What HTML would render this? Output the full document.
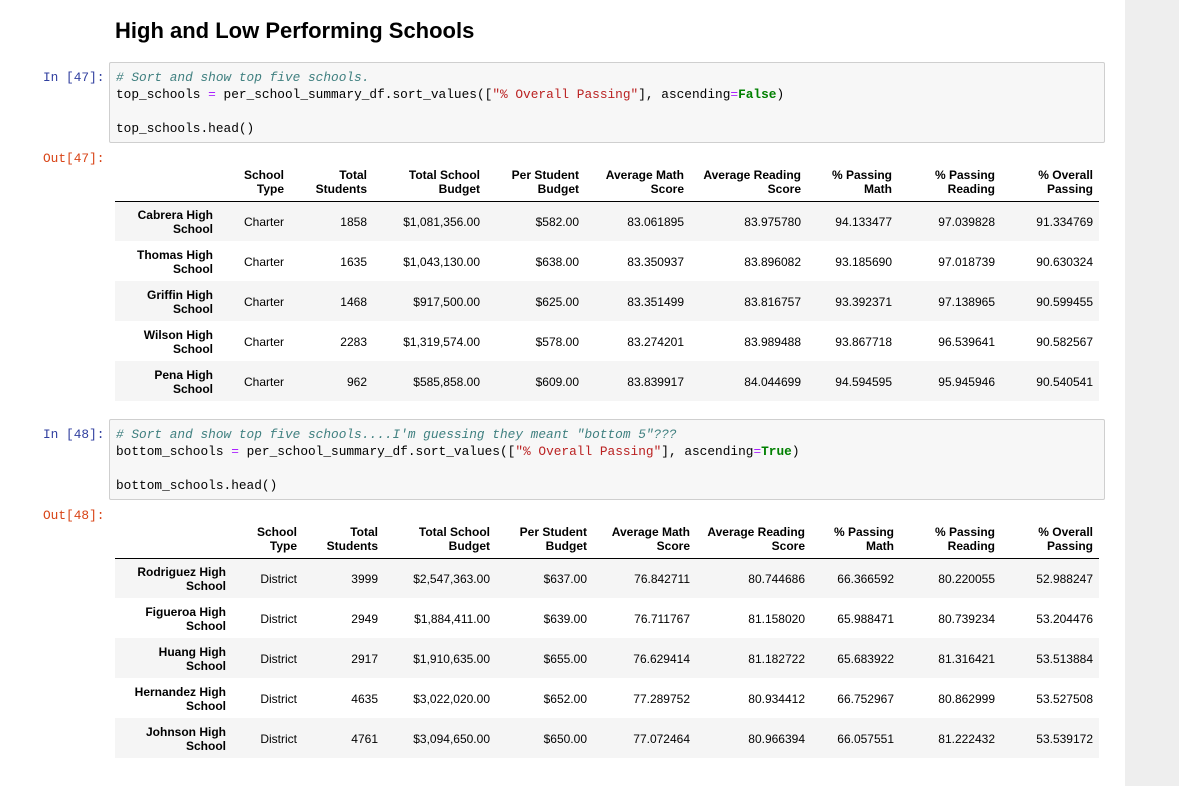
<!DOCTYPE html>
<html><head><meta charset="utf-8"><style>
*{margin:0;padding:0;box-sizing:border-box}
body{width:1179px;height:786px;background:#fff;position:relative;overflow:hidden;font-family:"Liberation Sans",Arial,sans-serif;color:#000}
.side{position:absolute;left:1125px;top:0;width:54px;height:786px;background:#eeeeee}
h1{position:absolute;left:115px;top:17px;font-size:22px;font-weight:bold;line-height:28px}
.prompt{position:absolute;font-family:"Liberation Mono","DejaVu Sans Mono",monospace;font-size:12.8px;line-height:17px}
.in{color:#303F9F}.out{color:#D84315}
.code{position:absolute;left:109px;width:996px;background:#f7f7f7;border:1px solid #cfcfcf;border-radius:2px;padding:6px 6px 4px;font-family:"Liberation Mono","DejaVu Sans Mono",monospace;font-size:12.8px;line-height:17px;white-space:pre;color:#000}
.c{color:#408080;font-style:italic}.o{color:#AA22FF}.s{color:#BA2121}.k{color:#008000;font-weight:bold}
table{position:absolute;left:115px;border-collapse:collapse;table-layout:fixed;font-size:12px}
th,td{text-align:right;padding:0 6px 0 0;vertical-align:middle}
td{padding-top:1px}
thead th{height:35px;line-height:14px;vertical-align:bottom;padding-bottom:5px;border-bottom:1px solid #000}
tbody tr{height:40px}
tbody th{line-height:14px;padding-top:1px}
tbody tr:nth-child(odd){background:#f5f5f5}
</style></head><body>
<div class="side"></div>
<h1>High and Low Performing Schools</h1>

<div class="prompt in" style="left:43px;top:69px">In [47]:</div>
<div class="code" style="top:62px;height:81px"><span class="c"># Sort and show top five schools.</span>
top_schools <span class="o">=</span> per_school_summary_df.sort_values([<span class="s">"% Overall Passing"</span>], ascending<span class="o">=</span><span class="k">False</span>)

top_schools.head()</div>
<div class="prompt out" style="left:43px;top:150px">Out[47]:</div>

<table style="top:166px;width:984px">
<colgroup><col style="width:104px"><col style="width:71px"><col style="width:83px"><col style="width:113px"><col style="width:99px"><col style="width:105px"><col style="width:117px"><col style="width:91px"><col style="width:103px"><col style="width:98px"></colgroup>
<thead><tr><th></th><th>School<br>Type</th><th>Total<br>Students</th><th>Total School<br>Budget</th><th>Per Student<br>Budget</th><th>Average Math<br>Score</th><th>Average Reading<br>Score</th><th>% Passing<br>Math</th><th>% Passing<br>Reading</th><th>% Overall<br>Passing</th></tr></thead>
<tbody>
<tr><th>Cabrera High<br>School</th><td>Charter</td><td>1858</td><td>$1,081,356.00</td><td>$582.00</td><td>83.061895</td><td>83.975780</td><td>94.133477</td><td>97.039828</td><td>91.334769</td></tr>
<tr><th>Thomas High<br>School</th><td>Charter</td><td>1635</td><td>$1,043,130.00</td><td>$638.00</td><td>83.350937</td><td>83.896082</td><td>93.185690</td><td>97.018739</td><td>90.630324</td></tr>
<tr><th>Griffin High<br>School</th><td>Charter</td><td>1468</td><td>$917,500.00</td><td>$625.00</td><td>83.351499</td><td>83.816757</td><td>93.392371</td><td>97.138965</td><td>90.599455</td></tr>
<tr><th>Wilson High<br>School</th><td>Charter</td><td>2283</td><td>$1,319,574.00</td><td>$578.00</td><td>83.274201</td><td>83.989488</td><td>93.867718</td><td>96.539641</td><td>90.582567</td></tr>
<tr><th>Pena High<br>School</th><td>Charter</td><td>962</td><td>$585,858.00</td><td>$609.00</td><td>83.839917</td><td>84.044699</td><td>94.594595</td><td>95.945946</td><td>90.540541</td></tr>
</tbody></table>

<div class="prompt in" style="left:43px;top:426px">In [48]:</div>
<div class="code" style="top:419px;height:81px"><span class="c"># Sort and show top five schools....I'm guessing they meant "bottom 5"???</span>
bottom_schools <span class="o">=</span> per_school_summary_df.sort_values([<span class="s">"% Overall Passing"</span>], ascending<span class="o">=</span><span class="k">True</span>)

bottom_schools.head()</div>
<div class="prompt out" style="left:43px;top:507px">Out[48]:</div>

<table style="top:523px;width:984px">
<colgroup><col style="width:117px"><col style="width:71px"><col style="width:81px"><col style="width:112px"><col style="width:97px"><col style="width:103px"><col style="width:115px"><col style="width:89px"><col style="width:101px"><col style="width:98px"></colgroup>
<thead><tr><th></th><th>School<br>Type</th><th>Total<br>Students</th><th>Total School<br>Budget</th><th>Per Student<br>Budget</th><th>Average Math<br>Score</th><th>Average Reading<br>Score</th><th>% Passing<br>Math</th><th>% Passing<br>Reading</th><th>% Overall<br>Passing</th></tr></thead>
<tbody>
<tr><th>Rodriguez High<br>School</th><td>District</td><td>3999</td><td>$2,547,363.00</td><td>$637.00</td><td>76.842711</td><td>80.744686</td><td>66.366592</td><td>80.220055</td><td>52.988247</td></tr>
<tr><th>Figueroa High<br>School</th><td>District</td><td>2949</td><td>$1,884,411.00</td><td>$639.00</td><td>76.711767</td><td>81.158020</td><td>65.988471</td><td>80.739234</td><td>53.204476</td></tr>
<tr><th>Huang High<br>School</th><td>District</td><td>2917</td><td>$1,910,635.00</td><td>$655.00</td><td>76.629414</td><td>81.182722</td><td>65.683922</td><td>81.316421</td><td>53.513884</td></tr>
<tr><th>Hernandez High<br>School</th><td>District</td><td>4635</td><td>$3,022,020.00</td><td>$652.00</td><td>77.289752</td><td>80.934412</td><td>66.752967</td><td>80.862999</td><td>53.527508</td></tr>
<tr><th>Johnson High<br>School</th><td>District</td><td>4761</td><td>$3,094,650.00</td><td>$650.00</td><td>77.072464</td><td>80.966394</td><td>66.057551</td><td>81.222432</td><td>53.539172</td></tr>
</tbody></table>
</body></html>
